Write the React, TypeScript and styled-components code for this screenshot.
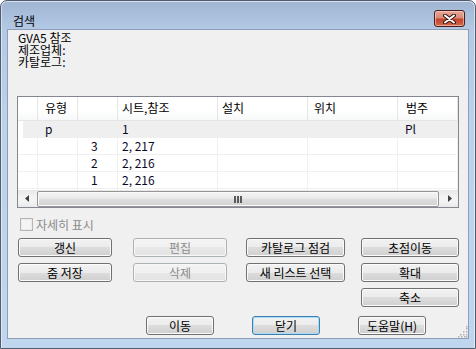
import React from 'react'
import styled, { createGlobalStyle } from 'styled-components'

const GlobalStyle = createGlobalStyle`
  html, body {
    margin: 0;
    padding: 0;
    background: #ffffff;
  }
  body {
    font-family: "Noto Sans CJK KR", "Noto Sans", sans-serif;
    font-size: 12px;
    color: #000;
  }
`

const Window = styled.div`
  width: 476px;
  height: 349px;
  box-sizing: border-box;
  border: 1px solid #4f5d6f;
  border-radius: 7px 7px 0 0;
  background: linear-gradient(to bottom, #9fb5d2 0px, #b3c9e5 29px, #bcd2eb 120px, #c0d6ee 100%);
  box-shadow: inset 0 1px 0 rgba(255, 255, 255, 0.6), inset 1px 0 0 rgba(255, 255, 255, 0.5),
    inset -1px 0 0 rgba(255, 255, 255, 0.5);
  display: flex;
  flex-direction: column;
  overflow: hidden;
`

const TitleBar = styled.div`
  height: 29px;
  box-sizing: border-box;
  padding: 6px 10px 0 12px;
  display: flex;
  align-items: center;
  justify-content: space-between;
`

const Title = styled.span`
  font-size: 12px;
  line-height: 14px;
  color: #000;
  margin-top: 5px;
`

const CloseButton = styled.div`
  width: 31px;
  height: 17px;
  box-sizing: border-box;
  border: 1px solid #4b1d18;
  border-radius: 3px;
  background: linear-gradient(to bottom, #e7a898 0%, #d88b78 45%, #c4432c 55%, #cf6a4e 100%);
  box-shadow: inset 0 0 0 1px rgba(255, 220, 210, 0.55);
  display: flex;
  align-items: center;
  justify-content: center;
`

const Client = styled.div`
  position: relative;
  margin: 0 7px;
  height: 308px;
  box-sizing: border-box;
  background: #f0f0f0;
  box-shadow: 0 0 0 1px #8d9fb7;
`

const Info = styled.div`
  padding: 2px 10px 0;
  height: 36px;
  display: flex;
  flex-direction: column;
  font-size: 12px;
  line-height: 12px;
`

const InfoLine = styled.div`
  height: 12px;
`

const ListBox = styled.div`
  margin: 28px 0 0 9px;
  width: 442px;
  height: 112px;
  box-sizing: border-box;
  border: 1px solid #828790;
  background: #fff;
  display: flex;
  flex-direction: column;
  overflow: hidden;
`

const Header = styled.div`
  height: 23px;
  flex: none;
  display: flex;
  background: linear-gradient(to bottom, #ffffff 0%, #ffffff 60%, #f7f8f9 100%);
  border-bottom: 1px solid #e5e5e5;
`

const HeaderCell = styled.div<{ $w?: number; $pad: number }>`
  ${({ $w }) => ($w ? `width: ${$w}px; flex: none;` : 'flex: 1;')}
  box-sizing: border-box;
  padding-left: ${({ $pad }) => $pad}px;
  border-right: 1px solid #e5e5e5;
  line-height: 21px;
  font-size: 12px;
  color: #000;
  white-space: nowrap;
`

const Rows = styled.div`
  flex: 1;
  overflow: hidden;
`

const Row = styled.div<{ $shaded?: boolean }>`
  height: 17px;
  display: flex;
  background: ${({ $shaded }) =>
    $shaded ? 'linear-gradient(to right, #ffffff 5px, #efefef 5px)' : '#ffffff'};
`

const Cell = styled.div<{ $w?: number; $pad: number; $shaded?: boolean }>`
  ${({ $w }) => ($w ? `width: ${$w}px; flex: none;` : 'flex: 1;')}
  box-sizing: border-box;
  padding-left: ${({ $pad }) => $pad}px;
  border-right: 1px solid ${({ $shaded }) => ($shaded ? 'transparent' : '#f0f0f0')};
  border-bottom: 1px solid ${({ $shaded }) => ($shaded ? 'transparent' : '#f0f0f0')};
  line-height: 16px;
  font-size: 12px;
  color: #0a0a28;
  white-space: nowrap;
`

const ScrollBar = styled.div`
  height: 17px;
  flex: none;
  display: flex;
  background: linear-gradient(to bottom, #e7e7e7, #f3f3f3 40%, #f3f3f3 70%, #e9e9e9);
`

const ScrollArrow = styled.div`
  width: 17px;
  flex: none;
  display: flex;
  align-items: center;
  justify-content: center;
`

const Thumb = styled.div`
  flex: 1;
  margin: 1px 2px 0;
  box-sizing: border-box;
  border: 1px solid #969696;
  border-radius: 2px;
  background: linear-gradient(to bottom, #f4f4f4 0%, #eaeaea 45%, #dcdcdc 55%, #d2d2d2 100%);
  box-shadow: inset 0 0 0 1px #fafafa;
  display: flex;
  align-items: center;
  justify-content: center;
`

const CheckRow = styled.label`
  margin: 10px 0 0 12px;
  height: 13px;
  display: flex;
  align-items: center;
  gap: 3px;
  color: #8a8a8a;
  font-size: 12px;
`

const CheckBox = styled.span`
  width: 13px;
  height: 13px;
  box-sizing: border-box;
  border: 1px solid #b4b4b4;
  background: #f4f4f4;
  box-shadow: inset 0 0 0 1px #ebebeb;
`

const ButtonGrid = styled.div`
  margin: 7px 0 0 10px;
  display: grid;
  grid-template-columns: 115px 113px 115px 98px;
  grid-auto-rows: 19px;
  row-gap: 6px;
`

const BottomRow = styled.div`
  margin: 9px 0 0 138px;
  display: flex;
  gap: 38px;
`

const Button = styled.div<{ $w: number; $col?: number; $disabled?: boolean; $default?: boolean }>`
  width: ${({ $w }) => $w}px;
  height: 19px;
  ${({ $col }) => ($col ? `grid-column: ${$col};` : '')}
  box-sizing: border-box;
  border: 1px solid
    ${({ $disabled, $default }) => ($disabled ? '#adb2b5' : $default ? '#3c7fb1' : '#707070')};
  border-radius: 3px;
  background: ${({ $disabled }) =>
    $disabled
      ? 'linear-gradient(to bottom, #f4f4f4 0%, #f0f0f0 50%, #e8e8e8 50%, #e3e3e3 100%)'
      : 'linear-gradient(to bottom, #f2f2f2 0%, #ebebeb 50%, #dddddd 50%, #cfcfcf 100%)'};
  box-shadow: inset 0 0 0 1px
    ${({ $disabled, $default }) => ($disabled ? '#f7f7f7' : $default ? '#a6dcf5' : '#fbfbfb')};
  color: ${({ $disabled }) => ($disabled ? '#8d8d8d' : '#000')};
  font-size: 12px;
  line-height: 17px;
  text-align: center;
  white-space: nowrap;
`

const Grip = styled.svg`
  position: absolute;
  right: 0;
  bottom: 0;
`

const columns = [
  { w: 20, pad: 0, label: '' },
  { w: 40, pad: 7, label: '유형' },
  { w: 40, pad: 0, label: '' },
  { w: 100, pad: 4, label: '시트,참조' },
  { w: 90, pad: 4, label: '설치' },
  { w: 90, pad: 6, label: '위치' },
  { pad: 8, label: '범주' },
]

const rows = [
  { cells: ['', 'p', '', '1', '', '', 'Pl'], shaded: true },
  { cells: ['', '', '3', '2, 217', '', '', ''] },
  { cells: ['', '', '2', '2, 216', '', '', ''] },
  { cells: ['', '', '1', '2, 216', '', '', ''] },
  { cells: ['', '', '', '', '', '', ''] },
]

const rowPads = [0, 7, 13, 4, 4, 6, 7]

const App = () => {
  return (
    <>
      <GlobalStyle />
      <Window>
        <TitleBar>
          <Title>검색</Title>
          <CloseButton>
            <svg width="13" height="10" viewBox="0 0 13 10">
              <path d="M2 1.5 L11 8.5 M11 1.5 L2 8.5" stroke="#3a1410" strokeWidth="4" strokeLinecap="round" />
              <path d="M2 1.5 L11 8.5 M11 1.5 L2 8.5" stroke="#ffffff" strokeWidth="2" strokeLinecap="round" />
            </svg>
          </CloseButton>
        </TitleBar>
        <Client>
          <Info>
            <InfoLine>GVA5 참조</InfoLine>
            <InfoLine>제조업체:</InfoLine>
            <InfoLine>카탈로그:</InfoLine>
          </Info>
          <ListBox>
            <Header>
              {columns.map((c, i) => (
                <HeaderCell key={i} $w={c.w} $pad={c.pad}>
                  {c.label}
                </HeaderCell>
              ))}
            </Header>
            <Rows>
              {rows.map((r, ri) => (
                <Row key={ri} $shaded={r.shaded}>
                  {r.cells.map((v, ci) => (
                    <Cell key={ci} $w={columns[ci].w} $pad={rowPads[ci]} $shaded={r.shaded}>
                      {v}
                    </Cell>
                  ))}
                </Row>
              ))}
            </Rows>
            <ScrollBar>
              <ScrollArrow>
                <svg width="4" height="7" viewBox="0 0 4 7">
                  <path d="M4 0 L0 3.5 L4 7 Z" fill="#404040" />
                </svg>
              </ScrollArrow>
              <Thumb>
                <svg width="9" height="7" viewBox="0 0 9 7">
                  <rect x="0" y="0" width="2" height="7" fill="#5a5a5a" />
                  <rect x="3" y="0" width="2" height="7" fill="#5a5a5a" />
                  <rect x="6" y="0" width="2" height="7" fill="#5a5a5a" />
                </svg>
              </Thumb>
              <ScrollArrow>
                <svg width="4" height="7" viewBox="0 0 4 7">
                  <path d="M0 0 L4 3.5 L0 7 Z" fill="#404040" />
                </svg>
              </ScrollArrow>
            </ScrollBar>
          </ListBox>
          <CheckRow>
            <CheckBox />
            자세히 표시
          </CheckRow>
          <ButtonGrid>
            <Button $w={94}>갱신</Button>
            <Button $w={94} $disabled>편집</Button>
            <Button $w={99}>카탈로그 점검</Button>
            <Button $w={98}>초점이동</Button>
            <Button $w={94}>줌 저장</Button>
            <Button $w={94} $disabled>삭제</Button>
            <Button $w={99}>새 리스트 선택</Button>
            <Button $w={98}>확대</Button>
            <Button $w={98} $col={4}>축소</Button>
          </ButtonGrid>
          <BottomRow>
            <Button $w={68}>이동</Button>
            <Button $w={68} $default>닫기</Button>
            <Button $w={68}>도움말(H)</Button>
          </BottomRow>
          <Grip width="12" height="12" viewBox="0 0 12 12">
            {[
              [10, 2], [10, 5], [10, 8], [7, 5], [7, 8], [4, 8], [10, 10], [8, 10], [5, 10], [2, 10], [10, 0],
            ].map(([x, y], i) => (
              <rect key={i} x={x} y={y} width="1.5" height="1.5" fill="#b0b0b0" />
            ))}
          </Grip>
        </Client>
      </Window>
    </>
  )
}

export default App
